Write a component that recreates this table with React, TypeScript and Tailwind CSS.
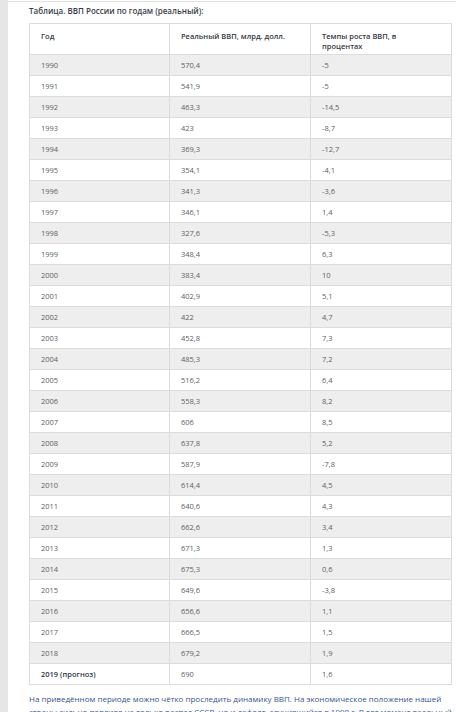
const rows: [string, string, string][] = [
  ['1990', '570,4', '-5'],
  ['1991', '541,9', '-5'],
  ['1992', '463,3', '-14,5'],
  ['1993', '423', '-8,7'],
  ['1994', '369,3', '-12,7'],
  ['1995', '354,1', '-4,1'],
  ['1996', '341,3', '-3,6'],
  ['1997', '346,1', '1,4'],
  ['1998', '327,6', '-5,3'],
  ['1999', '348,4', '6,3'],
  ['2000', '383,4', '10'],
  ['2001', '402,9', '5,1'],
  ['2002', '422', '4,7'],
  ['2003', '452,8', '7,3'],
  ['2004', '485,3', '7,2'],
  ['2005', '516,2', '6,4'],
  ['2006', '558,3', '8,2'],
  ['2007', '606', '8,5'],
  ['2008', '637,8', '5,2'],
  ['2009', '587,9', '-7,8'],
  ['2010', '614,4', '4,5'],
  ['2011', '640,6', '4,3'],
  ['2012', '662,6', '3,4'],
  ['2013', '671,3', '1,3'],
  ['2014', '675,3', '0,6'],
  ['2015', '649,6', '-3,8'],
  ['2016', '656,6', '1,1'],
  ['2017', '666,5', '1,5'],
  ['2018', '679,2', '1,9'],
]

export default function App() {
  return (
    <div className="flex h-[712px] overflow-hidden bg-white font-['Open_Sans',sans-serif]">
      {/* серая полоса слева */}
      <div className="w-2 shrink-0 bg-[#e6e6e6]" />

      <div className="flex-1 border-t border-[#e3e3e3] mt-px pl-[21px] pr-[6px]">
        <p className="pt-[3px] text-[8px] leading-[12px] font-semibold text-[#3a3f4a]">
          Таблица. ВВП России по годам (реальный):
        </p>

        <table className="mt-[6px] w-[422px] table-fixed border-collapse text-[7.5px] text-[#5a5f66]">
          <colgroup>
            <col className="w-[140px]" />
            <col className="w-[141px]" />
            <col className="w-[141px]" />
          </colgroup>
          <thead>
            <tr className="h-[31px] bg-white align-top text-[#333a44] font-semibold">
              <th className="border border-[#dcdcdc] px-[11px] pt-[7px] text-left font-semibold leading-[10px]">Год</th>
              <th className="border border-[#dcdcdc] px-[11px] pt-[7px] text-left font-semibold leading-[10px]">Реальный ВВП, млрд. долл.</th>
              <th className="border border-[#dcdcdc] px-[11px] pt-[7px] pr-[40px] text-left font-semibold leading-[10px]">Темпы роста ВВП, в процентах</th>
            </tr>
          </thead>
          <tbody>
            {rows.map(([year, gdp, growth], i) => (
              <tr key={year} className={i % 2 === 0 ? 'h-[21px] bg-[#eeeeee]' : 'h-[21px] bg-white'}>
                <td className="border border-[#dcdcdc] px-[11px] leading-[10px]">{year}</td>
                <td className="border border-[#dcdcdc] px-[11px] leading-[10px]">{gdp}</td>
                <td className="border border-[#dcdcdc] px-[11px] leading-[10px]">{growth}</td>
              </tr>
            ))}
            <tr className="h-[21px] bg-white">
              <td className="border border-[#dcdcdc] px-[11px] leading-[10px] font-semibold text-[#333a44]">2019 (прогноз)</td>
              <td className="border border-[#dcdcdc] px-[11px] leading-[10px]">690</td>
              <td className="border border-[#dcdcdc] px-[11px] leading-[10px]">1,6</td>
            </tr>
          </tbody>
        </table>

        <p className="mt-[7px] text-[8px] leading-[13px] text-[#35568a]">
          На приведённом периоде можно чётко проследить динамику ВВП. На экономическое положение нашей
          страны сильно повлиял не только распад СССР, но и дефолт, случившийся в 1998 г. В тот момент реальный
          ВВП снизился до минимальной отметки.
        </p>
      </div>
    </div>
  )
}
